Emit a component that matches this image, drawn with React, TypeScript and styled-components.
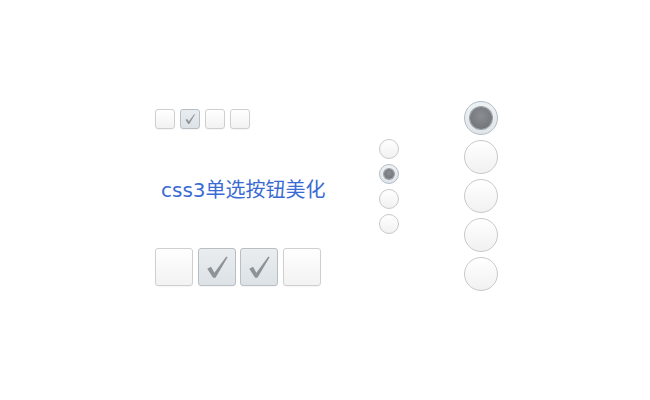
import React from 'react';
import styled, { createGlobalStyle, css } from 'styled-components';

const GlobalStyle = createGlobalStyle`
  html, body {
    margin: 0;
    padding: 0;
    background: #fff;
  }
  body {
    font-family: "DejaVu Sans", "Noto Sans CJK SC", sans-serif;
  }
`;

const Page = styled.div`
  width: 650px;
  height: 400px;
  display: flex;
  align-items: flex-start;
  padding-left: 155px;
  box-sizing: border-box;
`;

const LeftColumn = styled.div`
  display: flex;
  flex-direction: column;
  width: 224px;
  padding-top: 109px;
`;

const CheckRow = styled.div<{ $gap: number }>`
  display: flex;
  gap: ${(p) => p.$gap}px;
`;

const CheckBox = styled.div<{ $size: number; $checked?: boolean }>`
  width: ${(p) => p.$size}px;
  height: ${(p) => p.$size}px;
  box-sizing: border-box;
  border: 1px solid #cfcfcf;
  border-radius: 3px;
  background: linear-gradient(#ffffff, #f2f2f2);
  box-shadow: 0 1px 1px rgba(0, 0, 0, 0.04);
  display: flex;
  align-items: center;
  justify-content: center;
  ${(p) =>
    p.$checked &&
    css`
      border-color: #b7bec4;
      background: linear-gradient(#e9edf0, #dde2e6);
    `}
`;

const Title = styled.div`
  margin: 49px 0 0 6px;
  height: 70px;
  font-size: 20px;
  color: #3a6bd3;
  line-height: 24px;
`;

const MidColumn = styled.div`
  display: flex;
  flex-direction: column;
  gap: 5px;
  padding-top: 139px;
  width: 85px;
`;

const RightColumn = styled.div`
  display: flex;
  flex-direction: column;
  gap: 5px;
  padding-top: 101px;
`;

const Radio = styled.div<{ $size: number; $checked?: boolean }>`
  width: ${(p) => p.$size}px;
  height: ${(p) => p.$size}px;
  box-sizing: border-box;
  border-radius: 50%;
  border: 1px solid #c9c9c9;
  background: linear-gradient(#ffffff, #f1f1f1);
  display: flex;
  align-items: center;
  justify-content: center;
  ${(p) =>
    p.$checked &&
    css`
      border-color: #b4bcc4;
      background: linear-gradient(#eef2f5, #dfe5ea);
    `}
`;

const Dot = styled.div<{ $size: number }>`
  width: ${(p) => p.$size}px;
  height: ${(p) => p.$size}px;
  border-radius: 50%;
  background: radial-gradient(circle at 50% 40%, #8a8e92, #6b6f73);
  box-shadow: 0 0 0 1px #9aa0a6;
`;

const Check = ({ size }: { size: number }) => (
  <svg width={size} height={size} viewBox="0 0 24 24">
    <path d="M3 13.5 L6.5 11.8 L9.6 17.2 L20.6 2.2 L21.8 3 L10.6 22 L8.4 22 Z" fill="#8e9398" />
  </svg>
);

export default function App() {
  return (
    <>
      <GlobalStyle />
      <Page>
        <LeftColumn>
          <CheckRow $gap={5}>
            <CheckBox $size={20} />
            <CheckBox $size={20} $checked>
              <Check size={12} />
            </CheckBox>
            <CheckBox $size={20} />
            <CheckBox $size={20} />
          </CheckRow>
          <Title>css3单选按钮美化</Title>
          <CheckRow $gap={4.6}>
            <CheckBox $size={38} />
            <CheckBox $size={38} $checked>
              <Check size={26} />
            </CheckBox>
            <CheckBox $size={38} $checked>
              <Check size={26} />
            </CheckBox>
            <CheckBox $size={38} />
          </CheckRow>
        </LeftColumn>
        <MidColumn>
          <Radio $size={20} />
          <Radio $size={20} $checked>
            <Dot $size={10} />
          </Radio>
          <Radio $size={20} />
          <Radio $size={20} />
        </MidColumn>
        <RightColumn>
          <Radio $size={34} $checked>
            <Dot $size={22} />
          </Radio>
          <Radio $size={34} />
          <Radio $size={34} />
          <Radio $size={34} />
          <Radio $size={34} />
        </RightColumn>
      </Page>
    </>
  );
}
